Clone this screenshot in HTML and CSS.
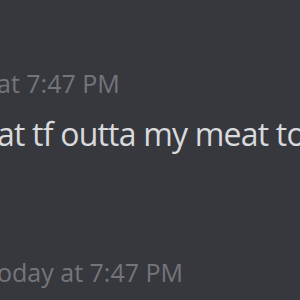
FILE: index.html
```html
<!DOCTYPE html>
<html lang="en">
<head>
    <meta charset="UTF-8">
    <title>Message</title>
    <link rel="stylesheet" href="styles.css">
</head>
<body>
    <div class="chat">
        <div class="stamp stamp-top">at 7:47 PM</div>
        <div class="message">at tf outta my meat to</div>
        <div class="stamp stamp-bottom">oday at 7:47 PM</div>
    </div>
</body>
</html>
```
FILE: styles.css
```css
* { margin: 0; padding: 0; box-sizing: border-box; }

body {
    background: #37383e;
    width: 300px;
    height: 300px;
    overflow: hidden;
    font-family: "Open Sans", "Noto Sans", sans-serif;
}

.chat {
    display: flex;
    flex-direction: column;
    padding-top: 68px;
}

.stamp {
    color: #74757b;
    font-size: 25px;
    line-height: 30px;
    white-space: nowrap;
    margin-left: -3px;
}

.message {
    color: #d9dadd;
    font-size: 32px;
    line-height: 40px;
    letter-spacing: -0.8px;
    white-space: nowrap;
    margin-left: -3px;
    margin-top: 16px;
}

.stamp-bottom {
    margin-top: 103px;
}
```
